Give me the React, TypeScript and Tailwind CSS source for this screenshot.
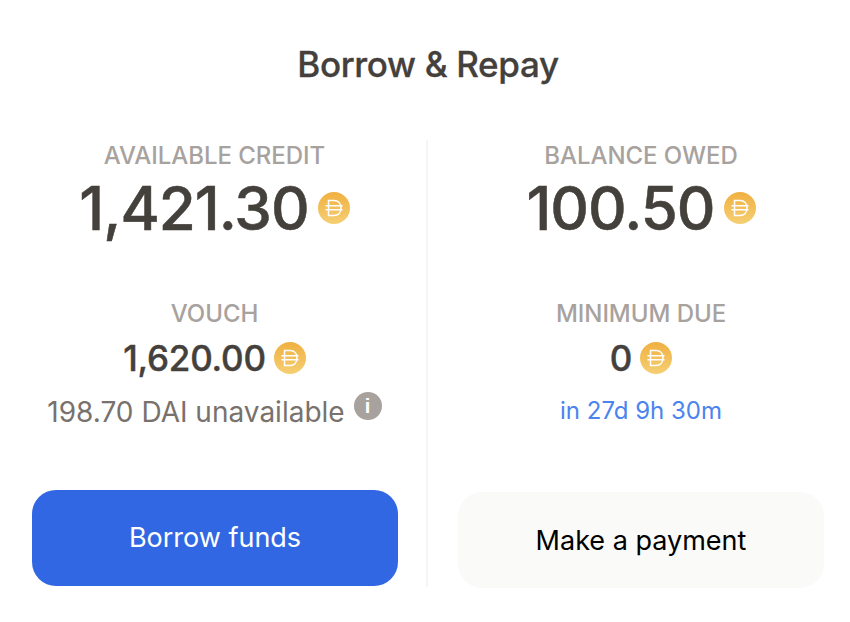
import React from 'react';

function DaiIcon({ size = 32 }: { size?: number }) {
  const id = `dai-${size}`;
  return (
    <svg width={size} height={size} viewBox="0 0 32 32" className="shrink-0">
      <defs>
        <linearGradient id={id} x1="0" y1="0" x2="0" y2="1">
          <stop offset="0" stopColor="#f0b041" />
          <stop offset="1" stopColor="#f5cf73" />
        </linearGradient>
      </defs>
      <circle cx="16" cy="16" r="16" fill={`url(#${id})`} />
      <path d="M10.500 8.500h5.500c4.300 0 7 3 7 7.500s-2.700 7.500-7 7.500h-5.500zM7.500 13.800h17M7.500 17.800h17" fill="none" stroke="#fff" strokeWidth="1.500" />
    </svg>
  );
}

function Stat({ label, value, large }: { label: string; value: string; large?: boolean }) {
  return (
    <div className="flex flex-col items-center">
      <div className="text-[24px] leading-[30px] font-medium text-[#a8a29e] tracking-[-0.05px]">{label}</div>
      {large ? (
        <div className="flex items-center gap-[9px] mt-[1px] h-[72px]">
          <span className="text-[60px] leading-[72px] font-medium text-[#44403c] tracking-[-1px] [-webkit-text-stroke:0.5px_#44403c]">{value}</span>
          <DaiIcon />
        </div>
      ) : (
        <div className="flex items-center gap-[8px] mt-[5px] h-[48px]">
          <span className="text-[35px] leading-[48px] font-medium text-[#44403c] tracking-[-0.2px] [-webkit-text-stroke:0.4px_#44403c]">{value}</span>
          <DaiIcon />
        </div>
      )}
    </div>
  );
}

export default function App() {
  return (
    <div className="w-[850px] h-[622px] bg-white overflow-hidden font-['Inter',sans-serif]">
      <h1 className="pt-[42px] pl-[6px] h-[140px] text-center text-[35px] leading-[44px] font-medium text-[#44403c] tracking-[-0.35px] [-webkit-text-stroke:0.3px_#44403c]">
        Borrow &amp; Repay
      </h1>
      <div className="flex">
        {/* Credit column */}
        <div className="w-[428px] pl-[32px] pr-[29px] border-r-2 border-[#f5f5f4] h-[447px] flex flex-col">
          <div className="pt-[1px]">
            <Stat label="AVAILABLE CREDIT" value="1,421.30" large />
          </div>
          <div className="mt-[55px]">
            <Stat label="VOUCH" value="1,620.00" />
          </div>
          <div className="mt-[12px] flex items-start justify-center gap-[9px] text-[#78716c]">
            <span className="text-[28px] leading-[36px]">198.70 DAI unavailable</span>
            <span className="mt-[-2px] w-[28px] h-[28px] rounded-full bg-[#a8a29e] text-white flex items-center justify-center text-[20px] font-bold font-['Liberation_Sans',sans-serif]">i</span>
          </div>
          <button className="mt-auto w-[366px] h-[96px] rounded-[24px] bg-[#3267e3] text-white text-[27px] leading-[36px] font-normal mb-[1px]">
            Borrow funds
          </button>
        </div>
        {/* Balance column */}
        <div className="w-[422px] pl-[30px] pr-[26px] h-[447px] flex flex-col">
          <div className="pt-[1px]">
            <Stat label="BALANCE OWED" value="100.50" large />
          </div>
          <div className="mt-[55px]">
            <Stat label="MINIMUM DUE" value="0" />
          </div>
          <div className="mt-[11px] text-center text-[24px] leading-[36px] text-[#4b83ef]">in 27d 9h 30m</div>
          <button className="mt-auto w-[366px] h-[96px] rounded-[24px] bg-[#fafaf9] text-black text-[27px] leading-[36px] font-normal mb-[-1px] pt-[2px]">
            Make a payment
          </button>
        </div>
      </div>
    </div>
  );
}
